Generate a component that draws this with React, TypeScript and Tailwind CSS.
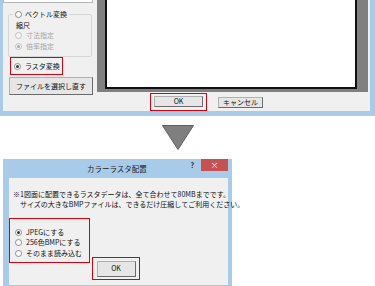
import React from "react";

const font = { fontFamily: '"Noto Sans CJK JP", "Noto Sans", sans-serif' };

function Radio({ checked, disabled }: { checked?: boolean; disabled?: boolean }) {
  return (
    <div
      className={`w-[7px] h-[7px] rounded-full border flex items-center justify-center shrink-0 ${
        disabled ? "border-[#c0c0c0] bg-[#f4f4f4]" : "border-[#8a8a8a] bg-white"
      }`}
    >
      {checked && (
        <div className={`w-[3px] h-[3px] rounded-full ${disabled ? "bg-[#a8a8a8]" : "bg-[#333]"}`} />
      )}
    </div>
  );
}

function Btn({ children, className }: { children: React.ReactNode; className: string }) {
  return (
    <div
      className={`flex items-center justify-center bg-[#e6e6e6] border border-[#b0b0b0] border-r-[#6a6a6a] border-b-[#6a6a6a] text-[7px] leading-none text-[#111] ${className}`}
    >
      {children}
    </div>
  );
}

export default function App() {
  return (
    <div className="w-[375px] h-[286px] bg-white overflow-hidden flex flex-col" style={font}>
      {/* Top window */}
      <div className="w-[375px] h-[116px] flex bg-[#f0f0f0] border-l-[3px] border-r-[5px] border-b-[5px] border-[#a9cbea] shrink-0">
        {/* Left panel */}
        <div className="w-[94px] flex flex-col shrink-0">
          <div className="w-[90px] h-[3px] bg-white border border-t-0 border-[#b5b5b5]" />
          <div className="ml-[5px] mt-[11px] w-[84px] h-[43px] border border-[#d6d6d6] rounded-[2px] flex flex-col">
            <div className="-mt-[6px] ml-[4px] w-fit px-[2px] bg-[#f0f0f0] flex items-center gap-[3px] h-[10px]">
              <Radio />
              <span className="text-[7px] leading-none text-[#111]">ベクトル変換</span>
            </div>
            <div className="ml-[7px] mt-[1px] h-[10px] flex items-center text-[7px] leading-none text-[#111]">縮尺</div>
            <div className="ml-[6px] h-[11px] flex items-center gap-[4px]">
              <Radio disabled />
              <span className="text-[7px] leading-none text-[#a6a6a6]">寸法指定</span>
            </div>
            <div className="ml-[6px] h-[11px] flex items-center gap-[4px]">
              <Radio checked disabled />
              <span className="text-[7px] leading-none text-[#a6a6a6]">倍率指定</span>
            </div>
          </div>
          <div className="ml-[7px] w-[53px] h-[18px] border border-[#d9000d] flex items-center pl-[3px] gap-[4px]">
            <Radio checked />
            <span className="text-[7px] leading-none text-[#111]">ラスタ変換</span>
          </div>
          <Btn className="ml-[6px] mt-[2px] w-[84px] h-[18px]">ファイルを選択し直す</Btn>
        </div>
        {/* Right column */}
        <div className="flex-1 flex flex-col">
          <div className="w-[271px] h-[92px] bg-[#808080] pl-[8px] pr-[11px] pb-[3px] shrink-0">
            <div className="w-full h-full bg-white border-2 border-t-0 border-[#111]" />
          </div>
          <div className="flex items-start">
            <div className="ml-[53px] mt-[1px] w-[57px] h-[18px] border border-[#d9000d] flex items-center justify-center">
              <Btn className="w-[49px] h-[11px] mt-[-1px]">OK</Btn>
            </div>
            <Btn className="ml-[11px] mt-[5px] w-[45px] h-[11px]">キャンセル</Btn>
          </div>
        </div>
      </div>

      {/* Arrow */}
      <div className="mt-[9px] ml-[162px] w-[32px] h-[25px] shrink-0">
        <svg width="32" height="25" viewBox="0 0 32 25">
          <polygon points="0.5,0.5 31.5,0.5 16,24.5" fill="#7f7f7f" stroke="#5f5f5f" strokeWidth="1" />
        </svg>
      </div>

      {/* Dialog */}
      <div className="mt-[9px] ml-[3px] w-[229px] h-[127px] bg-[#a9cbea] flex flex-col shrink-0">
        <div className="h-[19px] flex items-start shrink-0">
          <span className="ml-[84px] mt-[6px] text-[7.5px] leading-none text-[#222]">カラーラスタ配置</span>
          <div className="flex-1" />
          <span className="mt-[3px] mr-[7px] text-[7px] font-bold leading-none text-[#222]">?</span>
          <div className="mr-[4px] w-[27px] h-[12px] bg-[#c75050] flex items-center justify-center text-white text-[8px] leading-none">
            ×
          </div>
        </div>
        <div className="ml-[6px] mr-[4px] mb-[1px] flex-1 bg-[#f0f0f0] flex flex-col">
          <div className="mt-[11px] ml-[4px] text-[7px] leading-[10px] text-[#111] whitespace-nowrap">
            ※1図面に配置できるラスタデータは、全て合わせて80MBまでです。
          </div>
          <div className="ml-[11px] text-[7px] leading-[10px] text-[#111] whitespace-nowrap">
            サイズの大きなBMPファイルは、できるだけ圧縮してご利用ください。
          </div>
          <div className="mt-[9px] w-[81px] h-[45px] border border-[#d9000d] flex flex-col pt-[8px]">
            {[
              { t: "JPEGにする", c: true },
              { t: "256色BMPにする", c: false },
              { t: "そのまま読み込む", c: false },
            ].map((o) => (
              <div key={o.t} className="h-[10.5px] flex items-center ml-[5px] gap-[4px]">
                <Radio checked={o.c} />
                <span className="text-[7px] leading-none text-[#111]">{o.t}</span>
              </div>
            ))}
          </div>
          <div className="-mt-[6px] ml-[83px] w-[48px] h-[23px] border border-[#d9000d] flex items-center justify-center">
            <Btn className="w-[39px] h-[16px]">OK</Btn>
          </div>
        </div>
      </div>
    </div>
  );
}
